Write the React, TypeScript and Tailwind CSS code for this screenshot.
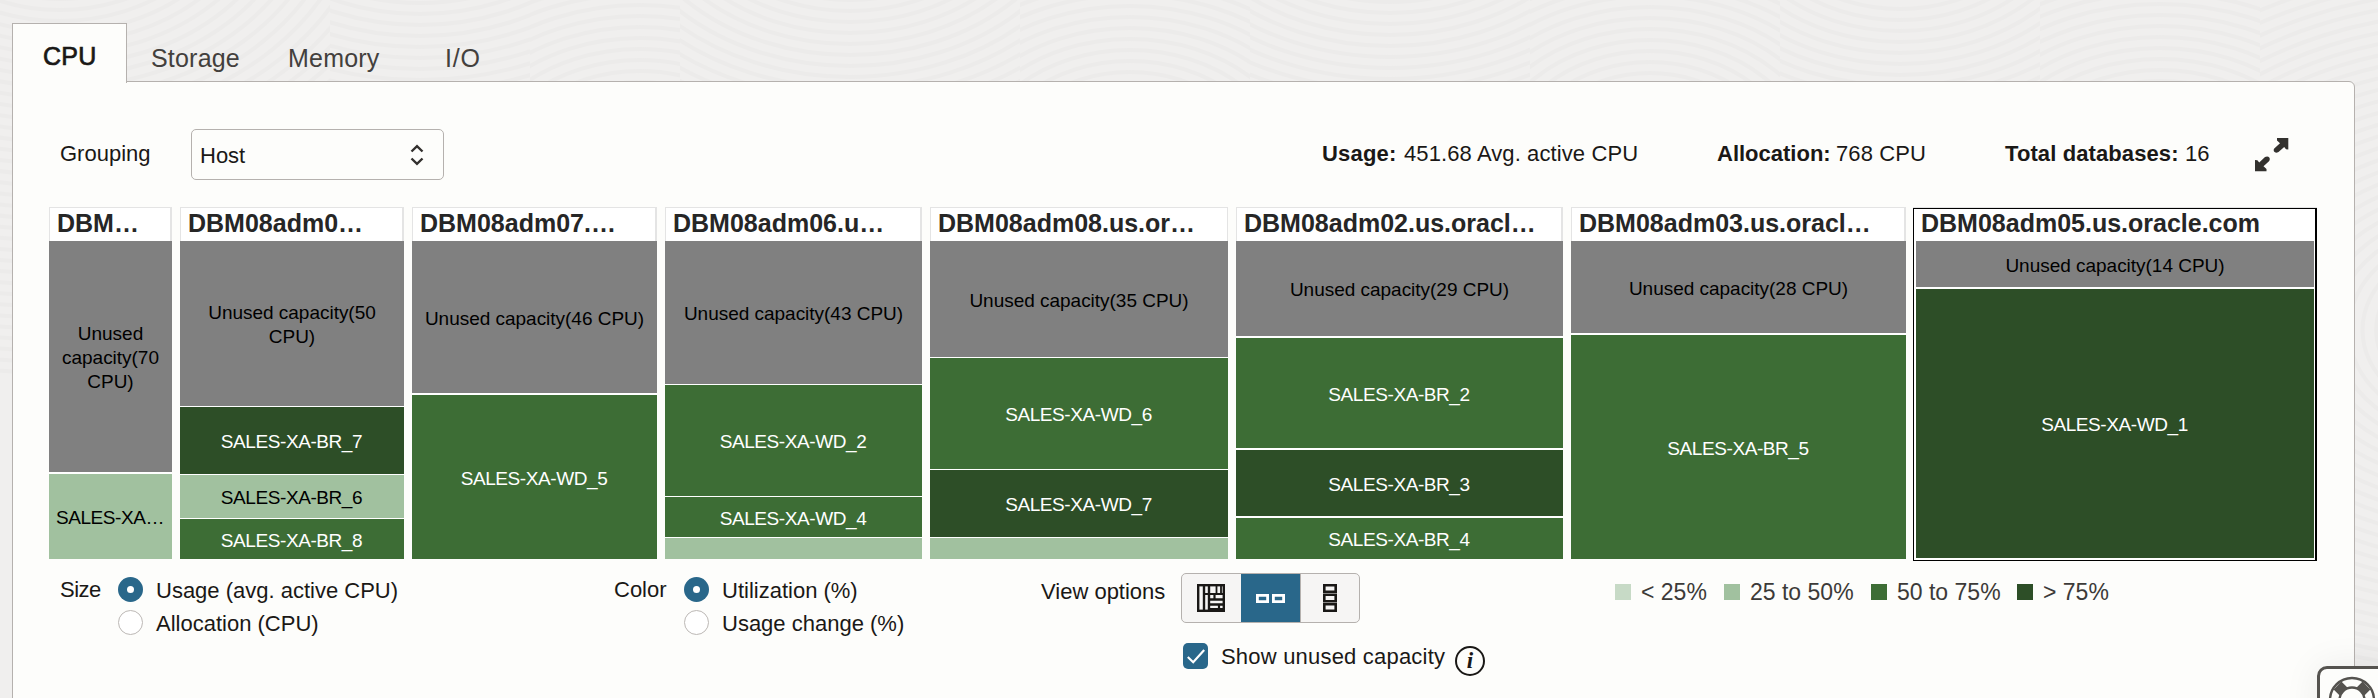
import React from "react";
import clsx from "clsx";

type Tile = { label: string; h: string; tone: Tone };
type Tone = "unused" | "light" | "mid" | "dark";
type Host = { name: string; width: string; gap: string; edge: string; tiles: Tile[]; selected?: boolean };

const TONES: Record<Tone, string> = {
  unused: "bg-[#808080] text-black",
  light: "bg-[#a1c19f] text-black",
  mid: "bg-[#3d6d35] text-white",
  dark: "bg-[#2d4e27] text-white",
};

const HOSTS: Host[] = [
  {
    name: "DBM…", width: "w-[123px]", gap: "gap-[2px]", edge: "border-r-2",
    tiles: [
      { label: "Unused capacity(70 CPU)", h: "h-[231px]", tone: "unused" },
      { label: "SALES-XA…", h: "h-[85px]", tone: "light" },
    ],
  },
  {
    name: "DBM08adm0…", width: "w-[224px]", gap: "gap-px", edge: "border-r-2",
    tiles: [
      { label: "Unused capacity(50 CPU)", h: "h-[165px]", tone: "unused" },
      { label: "SALES-XA-BR_7", h: "h-[67px]", tone: "dark" },
      { label: "SALES-XA-BR_6", h: "h-[43px]", tone: "light" },
      { label: "SALES-XA-BR_8", h: "h-[40px]", tone: "mid" },
    ],
  },
  {
    name: "DBM08adm07.…", width: "w-[245px]", gap: "gap-[2px]", edge: "border-r-2",
    tiles: [
      { label: "Unused capacity(46 CPU)", h: "h-[152px]", tone: "unused" },
      { label: "SALES-XA-WD_5", h: "h-[164px]", tone: "mid" },
    ],
  },
  {
    name: "DBM08adm06.u…", width: "w-[257px]", gap: "gap-px", edge: "border-r-2",
    tiles: [
      { label: "Unused capacity(43 CPU)", h: "h-[143px]", tone: "unused" },
      { label: "SALES-XA-WD_2", h: "h-[111px]", tone: "mid" },
      { label: "SALES-XA-WD_4", h: "h-[40px]", tone: "mid" },
      { label: "", h: "h-[21px]", tone: "light" },
    ],
  },
  {
    name: "DBM08adm08.us.or…", width: "w-[298px]", gap: "gap-px", edge: "border-r",
    tiles: [
      { label: "Unused capacity(35 CPU)", h: "h-[116px]", tone: "unused" },
      { label: "SALES-XA-WD_6", h: "h-[111px]", tone: "mid" },
      { label: "SALES-XA-WD_7", h: "h-[67px]", tone: "dark" },
      { label: "", h: "h-[21px]", tone: "light" },
    ],
  },
  {
    name: "DBM08adm02.us.oracl…", width: "w-[327px]", gap: "gap-[2px]", edge: "border-r-2",
    tiles: [
      { label: "Unused capacity(29 CPU)", h: "h-[95px]", tone: "unused" },
      { label: "SALES-XA-BR_2", h: "h-[110px]", tone: "mid" },
      { label: "SALES-XA-BR_3", h: "h-[66px]", tone: "dark" },
      { label: "SALES-XA-BR_4", h: "h-[41px]", tone: "mid" },
    ],
  },
  {
    name: "DBM08adm03.us.oracl…", width: "w-[335px]", gap: "gap-[2px]", edge: "border-r-2",
    tiles: [
      { label: "Unused capacity(28 CPU)", h: "h-[92px]", tone: "unused" },
      { label: "SALES-XA-BR_5", h: "h-[224px]", tone: "mid" },
    ],
  },
  {
    name: "DBM08adm05.us.oracle.com", width: "w-[404px]", gap: "gap-[2px]", edge: "", selected: true,
    tiles: [
      { label: "Unused capacity(14 CPU)", h: "h-[46px]", tone: "unused" },
      { label: "SALES-XA-WD_1", h: "h-[269px]", tone: "dark" },
    ],
  },
];

function HostColumn({ host }: { host: Host }) {
  const tiles = host.tiles.map((t, i) => (
    <div
      key={i}
      className={clsx(
        "flex shrink-0 items-center justify-center pt-[3px] text-center text-[19px] leading-6",
        t.h,
        TONES[t.tone],
        t.label.startsWith("SALES")
          ? "pr-[6px] pl-[5px] tracking-[-0.42px] whitespace-nowrap"
          : "px-[5px] tracking-[-0.02px]",
      )}
    >
      {t.label}
    </div>
  ));
  if (host.selected) {
    return (
      <div className={clsx("-ml-px shrink-0 border-t border-[#e4e4e4]", host.width)}>
        <div className="h-[353px] border border-r-2 border-black bg-white">
          <div className="flex h-8 items-center overflow-hidden pb-[3px] pl-[7px] text-[25px] font-bold whitespace-nowrap text-[#262626]">
            {host.name}
          </div>
          <div className={clsx("flex flex-col pr-px pl-[2px]", host.gap)}>{tiles}</div>
        </div>
      </div>
    );
  }
  return (
    <div className={clsx("h-[352px] shrink-0 bg-white", host.width)}>
      <div
        className={clsx(
          "flex h-[34px] items-center overflow-hidden border-t border-l border-[#e4e4e4] pb-[2px] pl-[7px] text-[25px] font-bold whitespace-nowrap text-[#262626]",
          host.edge,
        )}
      >
        {host.name}
      </div>
      <div className={clsx("flex flex-col", host.gap)}>{tiles}</div>
    </div>
  );
}

function Radio({ on }: { on?: boolean }) {
  return on ? (
    <span className="flex size-[25px] shrink-0 items-center justify-center rounded-full bg-[#29678a]">
      <span className="size-[7px] rounded-full bg-white" />
    </span>
  ) : (
    <span className="size-[25px] shrink-0 rounded-full border border-[#bcb8b5] bg-white" />
  );
}

function RadioGroup({ label, options, labelWidth }: { label: string; options: string[]; labelWidth: string }) {
  return (
    <div className="flex text-[22px] leading-[25px]">
      <span className={clsx("shrink-0 pl-px whitespace-nowrap", labelWidth)}>{label}</span>
      <div className="flex flex-col gap-2">
        {options.map((o, i) => (
          <label key={o} className="flex h-[25px] items-center gap-[13px]">
            <Radio on={i === 0} />
            <span className="pt-px whitespace-nowrap">{o}</span>
          </label>
        ))}
      </div>
    </div>
  );
}

function TreemapIcon() {
  return (
    <svg width="28" height="28" viewBox="0 0 28 28" fill="none" stroke="#1a1816">
      <rect x="1.2" y="1.2" width="25.6" height="25.6" strokeWidth="2.4" />
      <path d="M7 1V27M12 1V27" strokeWidth="2.4" />
      <path d="M7 10H27" strokeWidth="2.2" />
      <path d="M12.5 15.5H27M12.5 20.5H27" strokeWidth="2.6" />
      <path d="M19.5 1V10M24 1V10" strokeWidth="1.8" />
      <path d="M17.5 10V15M22 20.5V27" strokeWidth="2.2" />
      <path d="M12 25.5H27" strokeWidth="3" />
    </svg>
  );
}

function Swirls() {
  const fields = [
    { cx: 60, cy: -120, x: 0, w: 330 },
    { cx: 420, cy: -160, x: 330, w: 200 },
    { cx: 640, cy: 190, x: 530, w: 150 },
    { cx: 850, cy: -130, x: 680, w: 340 },
    { cx: 1130, cy: 180, x: 1020, w: 230 },
    { cx: 1390, cy: -150, x: 1250, w: 280 },
    { cx: 1650, cy: 170, x: 1530, w: 250 },
    { cx: 1900, cy: -110, x: 1780, w: 260 },
    { cx: 2160, cy: 200, x: 2040, w: 220 },
    { cx: 2470, cy: 330, x: 2260, w: 118 },
  ];
  const rings = Array.from({ length: 44 }, (_, i) => 20 + i * 11);
  return (
    <svg className="absolute inset-0" width="2378" height="698" fill="none" stroke="#ecebea" strokeWidth="4">
      {fields.map((f, i) => (
        <svg key={i} x={f.x} y="0" width={f.w} height="698" overflow="hidden">
          {rings.map((r) => (
            <ellipse key={r} cx={f.cx - f.x} cy={f.cy} rx={r * 1.25} ry={r} />
          ))}
        </svg>
      ))}
    </svg>
  );
}

const LEGEND = [
  { label: "< 25%", color: "bg-[#c7dac6]", width: "w-[109px]" },
  { label: "25 to 50%", color: "bg-[#a1c19f]", width: "w-[147px]" },
  { label: "50 to 75%", color: "bg-[#3d6d35]", width: "w-[146px]" },
  { label: "> 75%", color: "bg-[#2d4e27]", width: "w-[110px]" },
];

export default function App() {
  return (
    <div className="relative h-[698px] w-[2378px] overflow-hidden bg-[#f0efee] font-['Liberation_Sans',Arial,sans-serif] text-[#1a1816]">
      <Swirls />
      <div className="relative flex h-full flex-col pl-3">
        <nav className="z-10 flex h-[83px] shrink-0 pt-[23px] text-[25px] tracking-[0.2px] text-[#43403d]">
          <div className="flex h-[60px] w-[115px] items-center border border-b-0 border-[#b5b1ae] bg-[#fdfdfb] pt-[6px] pl-[30px] text-[#1a1816] [-webkit-text-stroke:0.7px_#1a1816]">
            CPU
          </div>
          <div className="flex h-[58px] w-[161px] items-center pt-[13px] pl-[24px]">Storage</div>
          <div className="flex h-[58px] w-[157px] items-center pt-[13px]">Memory</div>
          <div className="flex h-[58px] items-center pt-[13px] tracking-[0.8px]">I/O</div>
        </nav>

        <main className="-mt-[2px] h-[640px] w-[2343px] shrink-0 rounded-tr-md border border-[#b5b1ae] bg-[#fdfdfb] pt-[47px]">
          <div className="flex h-[51px] items-center text-[22px] whitespace-nowrap">
            <span className="w-[178px] pb-[2px] pl-[47px]">Grouping</span>
            <div className="flex h-[51px] w-[253px] items-center justify-between rounded-[5px] border border-[#b5b1ae] pt-px pr-[19px] pl-2">
              <span>Host</span>
              <svg width="14" height="22" viewBox="0 0 14 22" fill="none" stroke="#33302e" strokeWidth="2.4">
                <path d="M1.5 7.5 7 2.2 12.5 7.5M1.5 14.5 7 19.8 12.5 14.5" />
              </svg>
            </div>
            <div className="ml-[878px] flex pb-[2px]">
              <b className="w-[82px] tracking-[0.2px]">Usage:</b>
              <span className="w-[313px] tracking-[0.1px]">451.68 Avg. active CPU</span>
              <b className="w-[119px]">Allocation:</b>
              <span className="w-[169px] tracking-[0.1px]">768 CPU</span>
              <b className="w-[180px] tracking-[0.1px]">Total databases:</b>
              <span className="w-[70px]">16</span>
            </div>
            <svg width="34" height="34" viewBox="0 0 34 34" fill="#33312e">
              <path d="M22 0H33.3V11.5L31 11.2 29.2 9 23.5 14Q20.5 15.5 19 13.5Q18.2 11.5 19.5 10.3L25 5.2 22 2.5ZM11.5 33.3H0V22L2.4 22.2 4.2 24.5 10 19Q12.8 17.5 14.5 19.8Q15.2 21.8 14 23.2L8.5 28.2 11.5 31Z" />
            </svg>
          </div>

          <section className="mt-[27px] flex h-[354px] gap-2 pl-9">
            {HOSTS.map((h) => (
              <HostColumn key={h.name} host={h} />
            ))}
          </section>

          <div className="flex items-start pl-[46px] whitespace-nowrap">
            <div className="w-[554px] pt-4">
              <RadioGroup label="Size" labelWidth="w-[59px] tracking-[-0.5px]" options={["Usage (avg. active CPU)", "Allocation (CPU)"]} />
            </div>
            <div className="w-[428px] pt-4">
              <RadioGroup label="Color" labelWidth="w-[71px]" options={["Utilization (%)", "Usage change (%)"]} />
            </div>
            <div className="w-[574px] pt-3">
              <div className="flex text-[22px]">
                <span className="w-[140px] pt-[6px] leading-[25px]">View options</span>
                <div className="flex h-[50px] w-[179px] overflow-hidden rounded-[5px] border border-[#b5b1ae] bg-[#f6f5f4]">
                  <div className="flex w-[59px] items-center pl-[15px]">
                    <TreemapIcon />
                  </div>
                  <div className="-my-px flex h-[50px] w-[59px] items-center justify-center bg-[#29678a]">
                    <svg width="29" height="9" viewBox="0 0 29 9" fill="none" stroke="#fff" strokeWidth="2.8">
                      <path d="M1.4 1.4H11.6V7.6H1.4ZM17.4 1.4H27.6V7.6H17.4Z" />
                    </svg>
                  </div>
                  <div className="flex w-[59px] items-center justify-center border-l border-[#b5b1ae]">
                    <svg width="14" height="28" viewBox="0 0 14 28" fill="none" stroke="#1a1816" strokeWidth="2.6">
                      <path d="M1.3 1.3H12.7V7.7H1.3ZM1.3 10.8H12.7V17.2H1.3ZM1.3 20.3H12.7V26.7H1.3Z" />
                    </svg>
                  </div>
                </div>
              </div>
              <div className="mt-5 ml-[142px] flex text-[22px]">
                <span className="flex h-[26px] w-[25px] shrink-0 items-center justify-center rounded-[5px] bg-[#29678a]">
                  <svg width="18" height="15" viewBox="0 0 18 15" fill="none" stroke="#fff" strokeWidth="2.2">
                    <path d="M0.8 8 6.2 13.2 17.2 1" />
                  </svg>
                </span>
                <span className="w-[247px] shrink-0 pt-px pl-[13px] leading-[25px] tracking-[0.2px]">Show unused capacity</span>
                <span className="mt-[3px] flex size-[30px] items-center justify-center rounded-full border-2 border-[#1a1816] pb-[2px] font-['Liberation_Serif',serif] text-[23px] leading-none font-bold italic">
                  i
                </span>
              </div>
            </div>
            <div className="flex pt-[18px] text-[23px] leading-[26px] text-[#3c3a38]">
              {LEGEND.map((l) => (
                <div key={l.label} className={clsx("flex items-start", l.width)}>
                  <span className={clsx("mt-[5px] mr-[10px] size-4 shrink-0", l.color)} />
                  <span>{l.label}</span>
                </div>
              ))}
            </div>
          </div>
        </main>
      </div>

      <div className="absolute top-[666px] left-[2317px] h-[70px] w-[80px] rounded-[10px] border-[3px] border-[#55534f] bg-[#fdfdfb] shadow-[0_0_36px_rgba(0,0,0,0.07)]">
        <svg className="mt-[7px] ml-[8px]" width="48" height="48" viewBox="0 0 48 48" fill="none" stroke="#55534f">
          <circle cx="24" cy="24" r="22" strokeWidth="2.4" />
          <circle cx="24" cy="24" r="12.5" strokeWidth="2.4" />
          <path d="M15.5 15.5 9.5 9.5M32.5 15.5 38.5 9.5" strokeWidth="11" />
        </svg>
      </div>
    </div>
  );
}
